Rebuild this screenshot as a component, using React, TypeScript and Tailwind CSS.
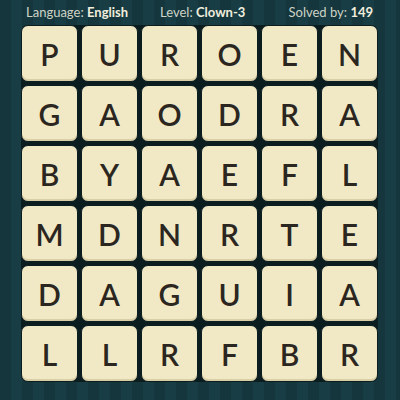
const ROWS = ['PUROEN', 'GAODRA', 'BYAEFL', 'MDNRTE', 'DAGUIA', 'LLRFBR'];

function Tile({ letter }: { letter: string }) {
  return (
    <div className="flex h-[57px] w-[57px] items-center justify-center rounded-[7px] border border-[#0c1d20] bg-[#f1e9c6] shadow-[inset_0_-2px_0_#d9cfa6]">
      <span className="text-[30px] font-semibold leading-none text-[#2b2620]">{letter}</span>
    </div>
  );
}

export default function App() {
  return (
    <div
      className="flex h-[400px] w-[400px] flex-col bg-[repeating-linear-gradient(90deg,#15363c_0px,#15363c_11px,#193d44_11px,#193d44_22px)]"
      style={{ fontFamily: 'Lato, "Open Sans", sans-serif' }}
    >
      <div className="flex h-[25px] items-center pl-[26px] pr-[27px] pt-[1px] text-[13px] text-[#cdd3c6]">
        <span className="w-[134px]">
          Language: <b className="font-bold text-[#f0eede]">English</b>
        </span>
        <span>
          Level: <b className="font-bold text-[#f0eede]">Clown-3</b>
        </span>
        <span className="ml-auto">
          Solved by: <b className="font-bold text-[#f0eede]">149</b>
        </span>
      </div>
      <div className="ml-[21px] grid w-[357px] grid-cols-6 gap-[3px] rounded-[7px] bg-[#0c1d20]">
        {ROWS.map((row, r) =>
          row.split('').map((ch, c) => <Tile key={`${r}-${c}`} letter={ch} />),
        )}
      </div>
    </div>
  );
}
